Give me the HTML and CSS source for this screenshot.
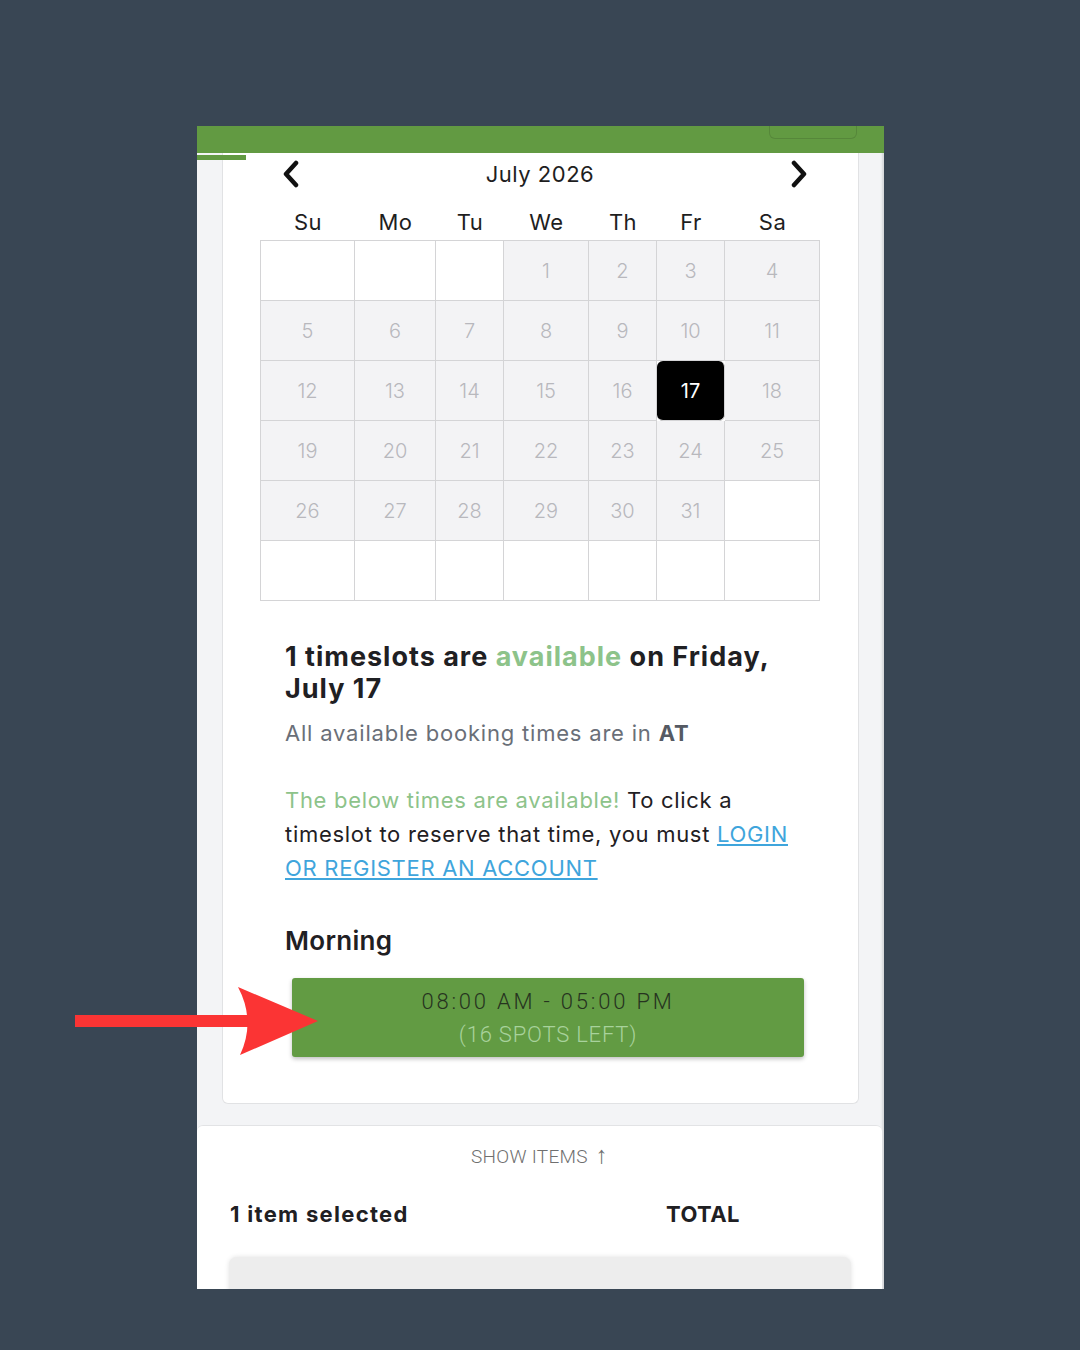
FILE: index.html
```html
<!DOCTYPE html>
<html lang="en">

<head>
    <meta charset="UTF-8">
    <meta name="viewport" content="width=device-width, initial-scale=1.0">
    <title>Book a Timeslot</title>
    <link rel="stylesheet" href="styles.css">
</head>

<body>
    <div class="screen">
        <div class="topbar"><span class="topbar-btn"></span></div>
        <span class="tab-line"></span>

        <div class="card">
            <div class="cal-head">
                <svg class="chev chev-left" width="17" height="28" viewBox="0 0 17 28">
                    <polyline points="14,3 4,14 14,25" />
                </svg>
                <span class="cal-title">July 2026</span>
                <svg class="chev chev-right" width="17" height="28" viewBox="0 0 17 28">
                    <polyline points="3,3 13,14 3,25" />
                </svg>
            </div>

            <div class="cal-grid weekdays">
                <span>Su</span><span>Mo</span><span>Tu</span><span>We</span><span>Th</span><span>Fr</span><span>Sa</span>
            </div>

            <div class="cal-grid days">
                <span class="cell empty"></span><span class="cell empty"></span><span class="cell empty"></span>
                <span class="cell">1</span><span class="cell">2</span><span class="cell">3</span><span class="cell">4</span>
                <span class="cell">5</span><span class="cell">6</span><span class="cell">7</span><span class="cell">8</span>
                <span class="cell">9</span><span class="cell">10</span><span class="cell">11</span>
                <span class="cell">12</span><span class="cell">13</span><span class="cell">14</span><span class="cell">15</span>
                <span class="cell">16</span><span class="cell selected">17</span><span class="cell">18</span>
                <span class="cell">19</span><span class="cell">20</span><span class="cell">21</span><span class="cell">22</span>
                <span class="cell">23</span><span class="cell">24</span><span class="cell">25</span>
                <span class="cell">26</span><span class="cell">27</span><span class="cell">28</span><span class="cell">29</span>
                <span class="cell">30</span><span class="cell">31</span><span class="cell empty"></span>
                <span class="cell empty"></span><span class="cell empty"></span><span class="cell empty"></span><span class="cell empty"></span>
                <span class="cell empty"></span><span class="cell empty"></span><span class="cell empty"></span>
            </div>

            <div class="info">
                <h2>1 timeslots are <span class="green">available</span> on Friday, July 17</h2>
                <p class="zone">All available booking times are in <b>AT</b></p>
                <p class="notice">
                    <span class="green">The below times are available!</span> To click a timeslot to reserve that
                    time, you must <a href="#">LOGIN OR REGISTER AN ACCOUNT</a>
                </p>
                <h3>Morning</h3>
                <button class="slot">
                    <span class="slot-time">08:00 AM - 05:00 PM</span>
                    <span class="slot-left">(16 SPOTS LEFT)</span>
                </button>
            </div>
        </div>

        <div class="summary">
            <div class="show-items">SHOW ITEMS <span class="up">&#8593;</span></div>
            <div class="summary-row">
                <span class="count">1 item selected</span>
                <span>TOTAL</span>
            </div>
            <button class="continue">CONTINUE &#8594;</button>
        </div>
    </div>

    <!-- red pointer over the timeslot -->
    <svg class="pointer" width="260" height="80" viewBox="70 985 260 80">
        <rect x="75" y="1015" width="175" height="12" />
        <path d="M238,987 L318,1021 L240,1055 Q256,1021 238,987 Z" />
    </svg>
</body>

</html>
```

FILE: styles.css
```css
body {
    margin: 0;
    padding: 126px 0 0 197px;
    background-color: #394654;
    font-family: Inter, "Noto Sans", sans-serif;
    height: 1350px;
    box-sizing: border-box;
    overflow: hidden;
    position: relative;
}

.screen {
    position: relative;
    width: 687px;
    height: 1163px;
    overflow: hidden;
    background-color: #f3f4f6;
    box-shadow: inset -3px 0 2px -1px #d6d8db;
}

.topbar {
    height: 27px;
    background-color: #629a42;
    display: flex;
    justify-content: flex-end;
    align-items: flex-start;
    padding-right: 27px;
}

.topbar-btn {
    width: 86px;
    height: 12px;
    border: 1px solid rgba(0, 0, 0, 0.12);
    border-top: none;
    border-radius: 0 0 6px 6px;
}

.tab-line {
    position: absolute;
    left: 0;
    top: 29px;
    width: 49px;
    height: 5px;
    background-color: #629a42;
}

.card {
    margin: 0 25px;
    background-color: #fff;
    border: 1px solid #e1e2e4;
    border-top: none;
    border-radius: 0 0 6px 6px;
    padding: 0 38px 46px 37px;
}

.cal-head {
    height: 42px;
    display: grid;
    grid-template-columns: 1fr auto 1fr;
    align-items: center;
}

.cal-title {
    font-size: 22px;
    letter-spacing: 0.5px;
    color: #1e1e1e;
}

.chev polyline {
    fill: none;
    stroke: #111;
    stroke-width: 4.5;
    stroke-linecap: round;
    stroke-linejoin: round;
}

.chev-left {
    margin-left: 22px;
}

.chev-right {
    justify-self: end;
    margin-right: 12px;
}

.cal-grid {
    display: grid;
    grid-template-columns: 94px 81px 68px 85px 68px 68px 95px;
}

.weekdays {
    padding: 12px 0 3px 1px;
    line-height: 30px;
    font-size: 22px;
    letter-spacing: 0.5px;
    color: #1e1e1e;
    text-align: center;
}

.days {
    border-top: 1px solid #d4d4d6;
    border-left: 1px solid #d4d4d6;
}

.cell {
    height: 59px;
    border-right: 1px solid #d4d4d6;
    border-bottom: 1px solid #d4d4d6;
    background-color: #f3f3f5;
    color: #b8b8bd;
    font-size: 20px;
    font-weight: 300;
    display: flex;
    align-items: center;
    justify-content: center;
}

.cell.empty {
    background-color: #fff;
}

.cell.selected {
    background-color: #000;
    color: #fff;
    border-radius: 6px;
    font-weight: 400;
}

.info {
    padding: 40px 12px 0 25px;
}

.info h2 {
    margin: 0;
    font-size: 27px;
    line-height: 32px;
    font-weight: 700;
    letter-spacing: 1px;
    color: #1f2023;
}

.green {
    color: #8dc38a;
}

.zone {
    margin: 11px 0 0;
    font-size: 22px;
    line-height: 34px;
    letter-spacing: 0.8px;
    color: #6a6f78;
}

.zone b {
    color: #555a63;
}

.notice {
    margin: 33px 0 0;
    font-size: 22px;
    line-height: 34px;
    letter-spacing: 0.7px;
    color: #1f2023;
}

.notice a {
    color: #3fa5dc;
}

.info h3 {
    margin: 39px 0 0;
    font-size: 26px;
    line-height: 34px;
    font-weight: 600;
    letter-spacing: 0.3px;
    color: #1f2023;
}

.slot {
    margin: 20px 0 0 7px;
    width: 512px;
    height: 79px;
    padding: 7px 0 0;
    border: none;
    border-radius: 3px;
    background-color: #629b43;
    box-shadow: 0 2px 4px rgba(0, 0, 0, 0.25);
    display: flex;
    flex-direction: column;
    align-items: center;
    justify-content: flex-start;
    font-family: Roboto, sans-serif;
    font-weight: 300;
    font-size: 22px;
    line-height: 33px;
}

.slot-time {
    color: #26331f;
    letter-spacing: 2.8px;
}

.slot-left {
    color: #a8d29c;
    letter-spacing: 0.8px;
}

.summary {
    margin: 21px 2px 0 0;
    background-color: #fff;
    border-top: 1px solid #e2e3e5;
    border-radius: 6px 6px 0 0;
    padding-top: 15px;
}

.show-items {
    text-align: center;
    font-family: Roboto, sans-serif;
    font-weight: 300;
    font-size: 19px;
    line-height: 28px;
    letter-spacing: 0.3px;
    color: #6f6f6f;
}

.show-items .up {
    font-size: 24px;
    margin-left: 3px;
}

.summary-row {
    margin-top: 28px;
    padding-left: 33px;
    display: grid;
    grid-template-columns: 436px auto;
    font-size: 22px;
    line-height: 30px;
    font-weight: 700;
    letter-spacing: 0.4px;
    color: #1f2023;
}

.summary-row .count {
    letter-spacing: 1.3px;
}

.continue {
    display: block;
    margin: 28px 0 0 32px;
    width: 622px;
    height: 80px;
    padding: 26px 0 0;
    border: none;
    border-radius: 8px;
    background-color: #ededed;
    box-shadow: 0 0 5px rgba(0, 0, 0, 0.12);
    font-family: Roboto, sans-serif;
    font-size: 22px;
    letter-spacing: 3px;
    color: #dadada;
    text-align: center;
    line-height: 28px;
}

.pointer {
    position: absolute;
    left: 70px;
    top: 985px;
}

.pointer rect,
.pointer path {
    fill: #fb3434;
}
```
